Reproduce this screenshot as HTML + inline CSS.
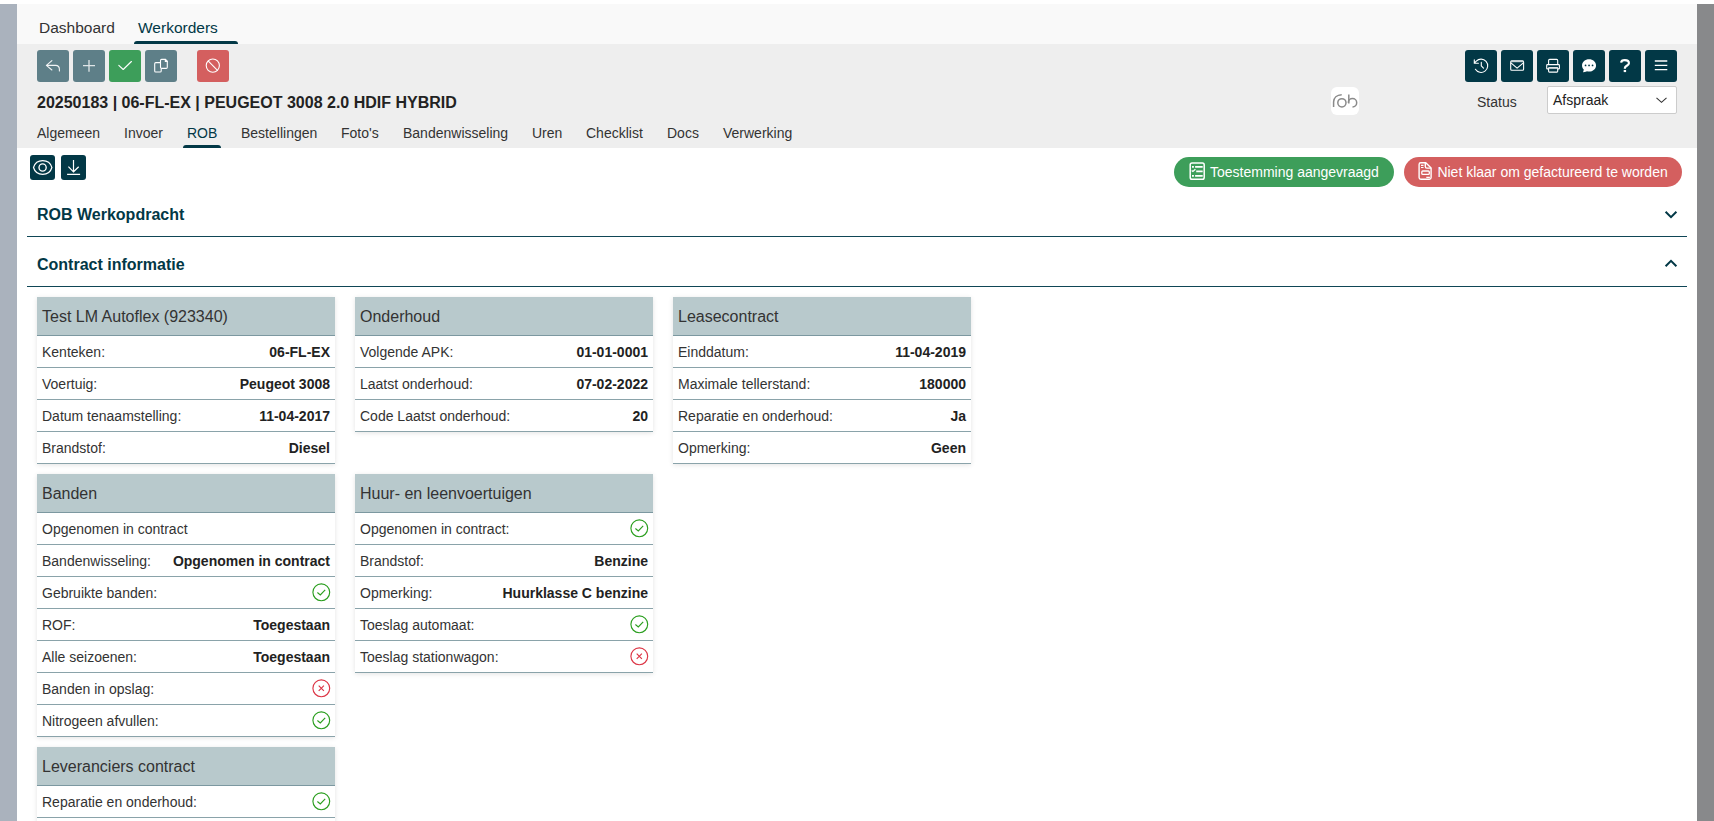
<!DOCTYPE html>
<html><head><meta charset="utf-8">
<style>
*{box-sizing:border-box;margin:0;padding:0}
html,body{width:1714px;height:821px;overflow:hidden;background:#fff;font-family:"Liberation Sans",sans-serif;color:#333}
.abs{position:absolute}
#lbar{left:0;top:4px;width:17px;height:817px;background:#aab2bd}
#rbar{left:1697px;top:4px;width:17px;height:817px;background:#88898b}
#topnav{left:17px;top:4px;width:1680px;height:40px;background:#f9f9f9}
#hdr{left:17px;top:44px;width:1680px;height:104px;background:#eeeeee}
.nav{font-size:15.5px;top:19px;line-height:17px}
.btn{width:32px;height:32px;border-radius:3px;top:50px}
.btn svg{position:absolute;left:0;top:0}
.g{background:#5e7f88}
.dk{background:#023846}
.tab{font-size:14px;top:125px;line-height:16px;color:#333}
.card{position:absolute;width:298px;background:#fff;box-shadow:0 1px 5px rgba(0,0,0,.11)}
.card .hd{height:39px;background:#b8c9cc;border-bottom:1px solid #7c98a0;font-size:16px;line-height:37px;padding:1px 0 0 5px;color:#333}
.card .r{height:32px;border-bottom:1px solid #8aa3aa;font-size:14px;display:flex;justify-content:space-between;align-items:center;padding:0 5px;line-height:16px;color:#333}
.card .r b{font-weight:bold;color:#222}
.sec{left:37px;font-size:16px;font-weight:bold;color:#023846;line-height:18px}
.hline{left:27px;width:1660px;height:1px;background:#0f4656}
</style></head><body>
<div class="abs" id="lbar"></div>
<div class="abs" id="rbar"></div>
<div class="abs" id="topnav"></div>
<div class="abs" id="hdr"></div>

<div class="abs nav" style="left:39px;color:#333">Dashboard</div>
<div class="abs nav" style="left:138px;color:#023846">Werkorders</div>
<div class="abs" style="left:134px;top:41px;width:104px;height:3px;background:#023846;border-radius:3px 3px 0 0"></div>

<!-- left action buttons -->
<div class="abs btn g" style="left:37px"><svg width="32" height="32" fill="none" stroke="#f2f4f5" stroke-width="1.1" stroke-linecap="round" stroke-linejoin="round"><path d="M14.9 10.7 L9.4 15.4 L14.9 20 M9.4 15.4 H18.6 Q22.4 15.4 22.4 19.5 V20.9"/></svg></div>
<div class="abs btn g" style="left:73px"><svg width="32" height="32" fill="none" stroke="#dfe5e7" stroke-width="1.3"><path d="M10 15.6 H22 M16 10 V21.8"/></svg></div>
<div class="abs btn" style="left:109px;background:#3d9e5a"><svg width="32" height="32" fill="none" stroke="#fff" stroke-width="1.1" stroke-linecap="round" stroke-linejoin="round"><path d="M9.8 15.3 L14.2 19.5 L22.4 11.5"/></svg></div>
<div class="abs btn g" style="left:145px"><svg width="32" height="32" fill="none" stroke="#fff" stroke-width="1.1" stroke-linejoin="round"><path d="M15.3 12.6 H10.8 Q9.7 12.6 9.7 13.7 V20.9 Q9.7 22 10.8 22 H15.1 Q16.2 22 16.2 20.9 V18.8"/><path d="M16.6 9.4 H20.3 L22.3 11.4 V17.3 Q22.3 18.4 21.2 18.4 H16.6 Q15.5 18.4 15.5 17.3 V10.5 Q15.5 9.4 16.6 9.4 Z"/><path d="M20.3 9.4 V11.4 H22.3 Z" fill="#fff"/></svg></div>
<div class="abs btn" style="left:197px;background:#d45f5f"><svg width="32" height="32" fill="none" stroke="#fff" stroke-width="1.1"><circle cx="15.8" cy="15.6" r="6.6"/><path d="M11.1 10.9 L20.5 20.3"/></svg></div>

<!-- right action buttons -->
<div class="abs btn dk" style="left:1465px"><svg width="32" height="32" fill="none" stroke="#fff" stroke-width="1.1" stroke-linecap="round" stroke-linejoin="round"><path d="M10.4 19.3 A6.65 6.65 0 1 0 11.3 11.1 L9.2 13.2 M9.3 9.9 V13.2 H13.4 M16.3 12.4 V15.9 L18.5 18.2"/></svg></div>
<div class="abs btn dk" style="left:1501px"><svg width="32" height="32" fill="none" stroke="#fff" stroke-width="1.1" stroke-linejoin="round"><rect x="9.7" y="10.9" width="12.9" height="9.3" rx="1"/><path d="M10 11.5 H22.3" stroke="#c9d3d6" stroke-width="1.4"/><path d="M9.9 12.8 L16.1 18.2 L22.4 12.8"/></svg></div>
<div class="abs btn dk" style="left:1537px"><svg width="32" height="32" fill="none" stroke="#fff" stroke-width="1.1" stroke-linejoin="round"><path d="M11.6 14.6 V10.5 Q11.6 9.4 12.7 9.4 H19.6 Q20.7 9.4 20.7 10.5 V14.6"/><path d="M11.6 18.9 H10.4 Q9.7 18.9 9.7 18.2 V15.3 Q9.7 14.6 10.4 14.6 H21.7 Q22.4 14.6 22.4 15.3 V18.2 Q22.4 18.9 21.7 18.9 H20.7"/><rect x="11.6" y="17.6" width="9.1" height="4.5" rx="0.8"/><path d="M12 18.3 H20.3" stroke="#b5c3c7" stroke-width="1.5"/></svg></div>
<div class="abs btn dk" style="left:1573px"><svg width="32" height="32"><g transform="translate(9.05,8.4) scale(0.875)"><path fill="#fff" d="M16 8c0 3.866-3.582 7-8 7a9 9 0 0 1-2.347-.306c-.584.296-1.925.864-4.181 1.234-.2.032-.352-.176-.273-.362.354-.836.674-1.95.77-2.966C.744 11.37 0 9.76 0 8c0-3.866 3.582-7 8-7s8 3.134 8 7M5 8a1 1 0 1 0-2 0 1 1 0 0 0 2 0m4 0a1 1 0 1 0-2 0 1 1 0 0 0 2 0m3 1a1 1 0 1 0 0-2 1 1 0 0 0 0 2"/></g></svg></div>
<div class="abs btn dk" style="left:1609px"><svg width="32" height="32" fill="none" stroke="#fff" stroke-width="2.2"><path d="M12.1 12.6 C12.3 11 13.5 10.2 15.8 10.2 C18.3 10.2 19.9 11.4 19.9 13.2 C19.9 15.6 15.9 15.9 15.9 18 V18.8"/><rect x="14.7" y="20" width="2.4" height="2.1" fill="#fff" stroke="none"/></svg></div>
<div class="abs btn dk" style="left:1645px"><svg width="32" height="32" fill="none" stroke="#fff" stroke-width="1.3"><path d="M9.8 11 H22.3 M9.8 15.3 H22.3 M9.8 19.7 H22.3"/></svg></div>

<div class="abs" style="left:37px;top:94px;font-size:16px;font-weight:bold;color:#222;line-height:18px">20250183 | 06-FL-EX | PEUGEOT 3008 2.0 HDIF HYBRID</div>

<div class="abs" style="left:1331px;top:87px;width:28px;height:28px;background:#fff;border-radius:6px"></div><svg class="abs" style="left:1325px;top:82px" width="40" height="38" fill="none" stroke="#8a8a8a" stroke-width="1.5"><path d="M8.6 25 V20 C8.6 15.5 12 12.9 16.7 12.7"/><circle cx="16.9" cy="20.8" r="4.1"/><path d="M23.8 12.5 V21.4"/><path d="M23.3 20.8 A4.2 4.2 0 1 1 27.5 25"/></svg>
<div class="abs" style="left:1477px;top:94px;font-size:14px;line-height:16px;color:#333">Status</div>
<div class="abs" style="left:1547px;top:86px;width:130px;height:28px;background:#fff;border:1px solid #ccc;border-radius:2px"></div>
<svg class="abs" style="left:1650px;top:90px" width="22" height="16" fill="none" stroke="#333" stroke-width="1.1"><path d="M6.5 7.8 L11.5 12.3 L16.5 7.8"/></svg>
<div class="abs" style="left:1553px;top:92px;font-size:14px;line-height:16px;color:#222">Afspraak</div>

<div class="abs tab" style="left:37px">Algemeen</div>
<div class="abs tab" style="left:124px">Invoer</div>
<div class="abs tab" style="left:187px;color:#023846">ROB</div>
<div class="abs tab" style="left:241px">Bestellingen</div>
<div class="abs tab" style="left:341px">Foto's</div>
<div class="abs tab" style="left:403px">Bandenwisseling</div>
<div class="abs tab" style="left:532px">Uren</div>
<div class="abs tab" style="left:586px">Checklist</div>
<div class="abs tab" style="left:667px">Docs</div>
<div class="abs tab" style="left:723px">Verwerking</div>
<div class="abs" style="left:183px;top:145px;width:38px;height:3px;background:#023846;border-radius:3px 3px 0 0"></div>

<!-- toolbar -->
<div class="abs dk" style="left:30px;top:155px;width:25px;height:25px;border-radius:3px"><svg width="25" height="25" fill="none" stroke="#fff" stroke-width="1.2" style="position:absolute;left:0;top:0"><path d="M3.5 12.5 A9.6 9.6 0 0 1 21.9 12.5 A9.6 9.6 0 0 1 3.5 12.5 Z"/><circle cx="12.6" cy="12.5" r="3.6" stroke-width="1.35"/></svg></div>
<div class="abs dk" style="left:61px;top:155px;width:25px;height:25px;border-radius:3px"><svg width="25" height="25" fill="none" stroke="#fff" stroke-width="1.2" style="position:absolute;left:0;top:0"><path d="M12.5 5 V16.6 M7.4 11.7 L12.5 16.8 L17.7 11.7 M6.1 19.4 H19.1"/></svg></div>

<div class="abs" style="left:1174px;top:157px;width:220px;height:30px;border-radius:15px;background:#3d9e5a"></div>
<svg class="abs" style="left:1186px;top:159px" width="22" height="24" fill="none" stroke="#fff" stroke-width="1.5"><rect x="4.2" y="3.9" width="14" height="16.3" rx="1.8"/><path d="M6 7.8 H7.9 M9.1 7.8 H16.7 M9.1 16.8 H16.7 M6 16.8 H7.9 M10.2 12.3 H16.7" stroke-width="1.7"/><path d="M5.7 11.5 L6.9 12.5 L9.4 10.3" stroke-width="1.3"/></svg>
<div class="abs" style="left:1210px;top:164px;font-size:14px;line-height:16px;color:#fff">Toestemming aangevraagd</div>
<div class="abs" style="left:1404px;top:157px;width:278px;height:30px;border-radius:15px;background:#d45f5f"></div>
<svg class="abs" style="left:1414px;top:159px" width="22" height="24" fill="none" stroke="#fff" stroke-width="1.4" stroke-linejoin="round"><path d="M11.8 3.8 H6.8 Q5.1 3.8 5.1 5.5 V18.6 Q5.1 20.3 6.8 20.3 H15.4 Q17.1 20.3 17.1 18.6 V9.1 Z"/><path d="M11.3 3.9 V7.5 Q11.3 9.1 12.9 9.1 H17" /><path d="M7 6.3 H9.5 M7 8.5 H9.5 M12.3 18.4 H15.9" stroke-width="1.2"/><rect x="7.8" y="12" width="7.5" height="3.4" rx="1" stroke-width="1.3"/></svg>
<div class="abs" style="left:1437.4px;top:164px;font-size:14px;line-height:16px;color:#fff">Niet klaar om gefactureerd te worden</div>

<div class="abs sec" style="top:206px">ROB Werkopdracht</div>
<div class="abs hline" style="top:236px"></div><svg class="abs" style="left:1660px;top:205px" width="22" height="20" fill="none" stroke="#023846" stroke-width="2"><path d="M5.6 6.8 L11 12.2 L16.4 6.8"/></svg>
<div class="abs sec" style="top:256px">Contract informatie</div>
<div class="abs hline" style="top:286px"></div><svg class="abs" style="left:1660px;top:255px" width="22" height="20" fill="none" stroke="#023846" stroke-width="2"><path d="M5.6 11.2 L11 5.8 L16.4 11.2"/></svg>

<!-- cards -->
<div class="card" style="left:37px;top:297px">
 <div class="hd">Test LM Autoflex (923340)</div>
 <div class="r"><span>Kenteken:</span><b>06-FL-EX</b></div>
 <div class="r"><span>Voertuig:</span><b>Peugeot 3008</b></div>
 <div class="r"><span>Datum tenaamstelling:</span><b>11-04-2017</b></div>
 <div class="r"><span>Brandstof:</span><b>Diesel</b></div>
</div>
<div class="card" style="left:355px;top:297px">
 <div class="hd">Onderhoud</div>
 <div class="r"><span>Volgende APK:</span><b>01-01-0001</b></div>
 <div class="r"><span>Laatst onderhoud:</span><b>07-02-2022</b></div>
 <div class="r"><span>Code Laatst onderhoud:</span><b>20</b></div>
</div>
<div class="card" style="left:673px;top:297px">
 <div class="hd">Leasecontract</div>
 <div class="r"><span>Einddatum:</span><b>11-04-2019</b></div>
 <div class="r"><span>Maximale tellerstand:</span><b>180000</b></div>
 <div class="r"><span>Reparatie en onderhoud:</span><b>Ja</b></div>
 <div class="r"><span>Opmerking:</span><b>Geen</b></div>
</div>
<div class="card" style="left:37px;top:474px">
 <div class="hd">Banden</div>
 <div class="r"><span>Opgenomen in contract</span></div>
 <div class="r"><span>Bandenwisseling:</span><b>Opgenomen in contract</b></div>
 <div class="r"><span>Gebruikte banden:</span><svg width="20" height="20" fill="none" stroke="#2a9e1e" stroke-width="1.15" style="margin-right:-1px"><circle cx="10.3" cy="9.3" r="8.4"/><path d="M6.4 9.5 L9.3 11.9 L14.2 6.8"/></svg></div>
 <div class="r"><span>ROF:</span><b>Toegestaan</b></div>
 <div class="r"><span>Alle seizoenen:</span><b>Toegestaan</b></div>
 <div class="r"><span>Banden in opslag:</span><svg width="20" height="20" fill="none" stroke="#dc3545" stroke-width="1.15" style="margin-right:-1px"><circle cx="10.3" cy="9.3" r="8.4"/><path d="M7.7 6.7 L12.9 11.9 M12.9 6.7 L7.7 11.9"/></svg></div>
 <div class="r"><span>Nitrogeen afvullen:</span><svg width="20" height="20" fill="none" stroke="#2a9e1e" stroke-width="1.15" style="margin-right:-1px"><circle cx="10.3" cy="9.3" r="8.4"/><path d="M6.4 9.5 L9.3 11.9 L14.2 6.8"/></svg></div>
</div>
<div class="card" style="left:355px;top:474px">
 <div class="hd">Huur- en leenvoertuigen</div>
 <div class="r"><span>Opgenomen in contract:</span><svg width="20" height="20" fill="none" stroke="#2a9e1e" stroke-width="1.15" style="margin-right:-1px"><circle cx="10.3" cy="9.3" r="8.4"/><path d="M6.4 9.5 L9.3 11.9 L14.2 6.8"/></svg></div>
 <div class="r"><span>Brandstof:</span><b>Benzine</b></div>
 <div class="r"><span>Opmerking:</span><b>Huurklasse C benzine</b></div>
 <div class="r"><span>Toeslag automaat:</span><svg width="20" height="20" fill="none" stroke="#2a9e1e" stroke-width="1.15" style="margin-right:-1px"><circle cx="10.3" cy="9.3" r="8.4"/><path d="M6.4 9.5 L9.3 11.9 L14.2 6.8"/></svg></div>
 <div class="r"><span>Toeslag stationwagon:</span><svg width="20" height="20" fill="none" stroke="#dc3545" stroke-width="1.15" style="margin-right:-1px"><circle cx="10.3" cy="9.3" r="8.4"/><path d="M7.7 6.7 L12.9 11.9 M12.9 6.7 L7.7 11.9"/></svg></div>
</div>
<div class="card" style="left:37px;top:747px">
 <div class="hd">Leveranciers contract</div>
 <div class="r"><span>Reparatie en onderhoud:</span><svg width="20" height="20" fill="none" stroke="#2a9e1e" stroke-width="1.15" style="margin-right:-1px"><circle cx="10.3" cy="9.3" r="8.4"/><path d="M6.4 9.5 L9.3 11.9 L14.2 6.8"/></svg></div>
 <div class="r"><span>&nbsp;</span></div>
</div>

</body></html>
